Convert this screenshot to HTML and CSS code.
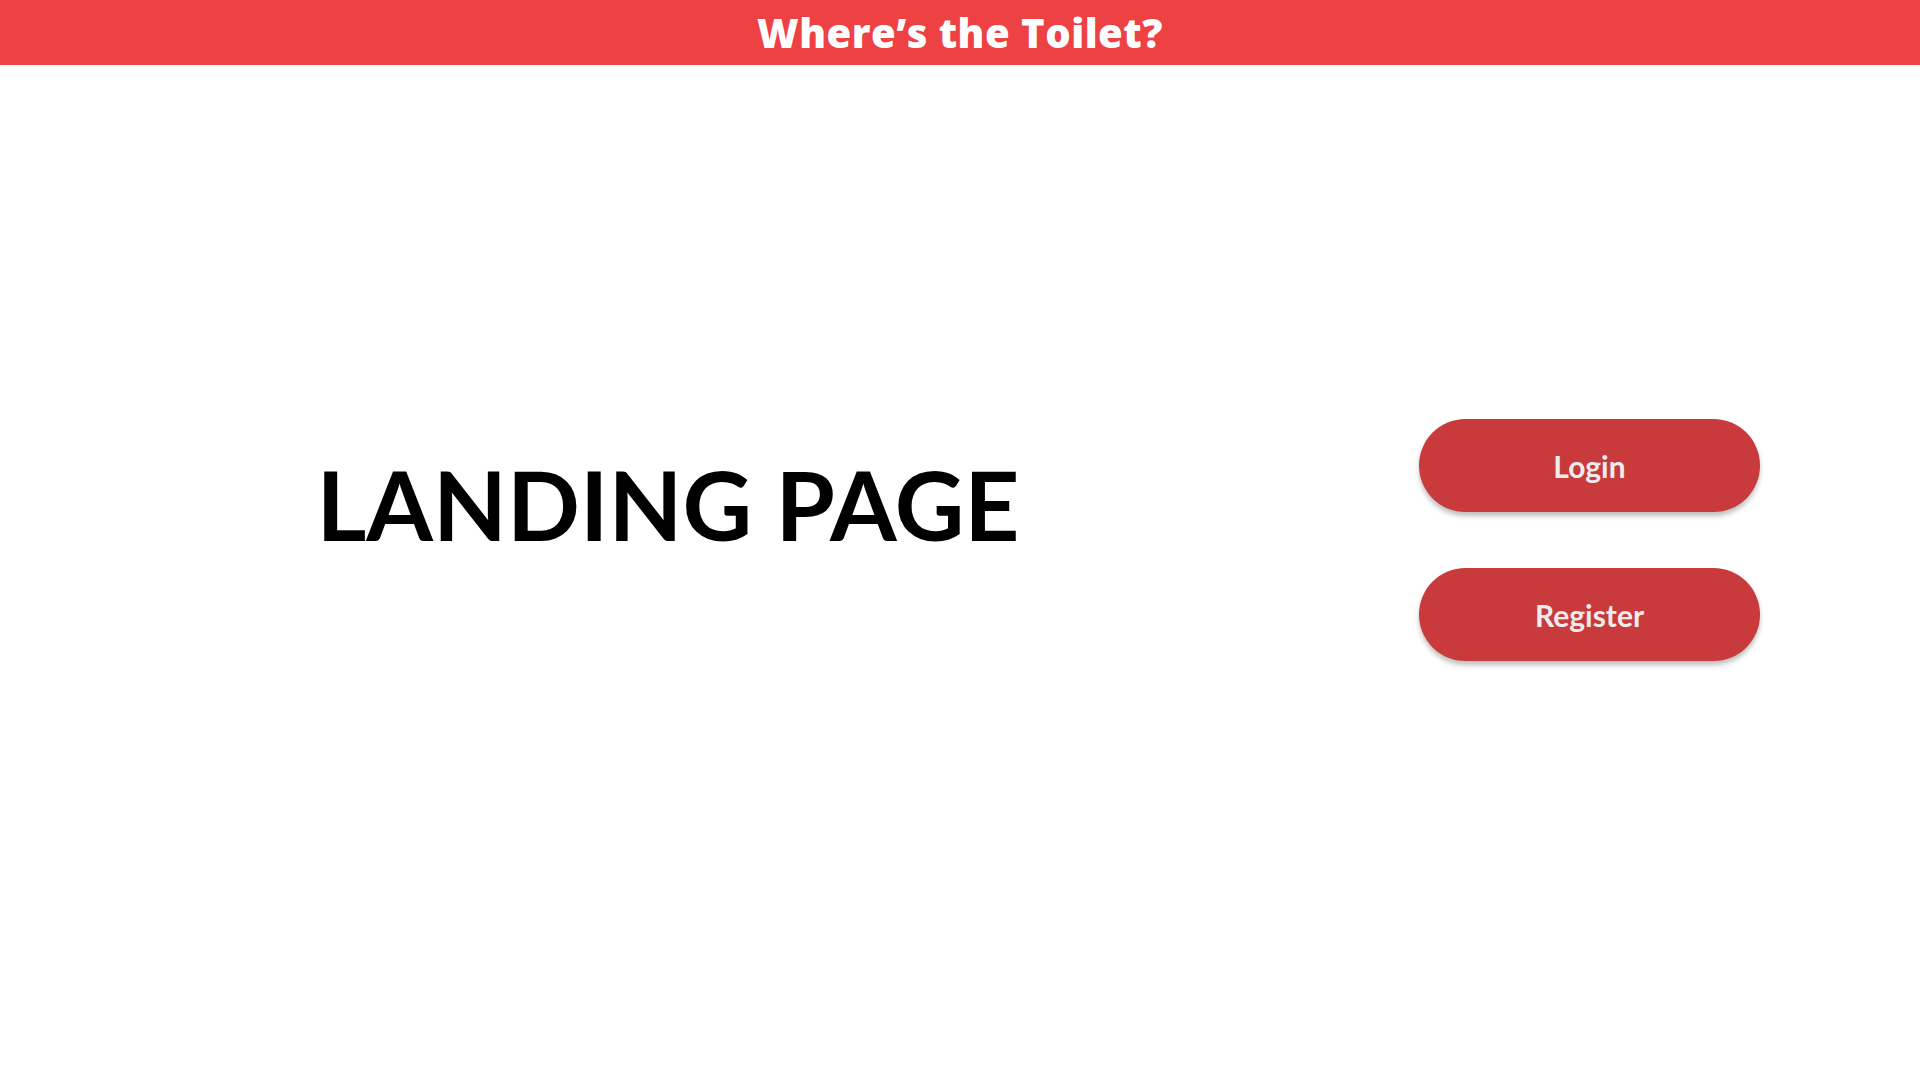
FILE: index.html
```html
<!DOCTYPE html>
<html lang="en">
<head>
<meta charset="utf-8">
<title>Where's the Toilet?</title>
<link rel="stylesheet" href="styles.css">
</head>
<body>
<header class="topbar">
  <h1 class="brand">Where’s the Toilet?</h1>
</header>
<main class="landing">
  <section class="hero">
    <h2 class="hero-title">LANDING PAGE</h2>
  </section>
  <section class="actions">
    <button class="pill">Login</button>
    <button class="pill">Register</button>
  </section>
</main>
</body>
</html>
```
FILE: styles.css
```css
* { box-sizing: border-box; }
html, body { margin: 0; padding: 0; }
body {
  width: 1920px;
  height: 1080px;
  background: #ffffff;
  font-family: "Lato", "Open Sans", sans-serif;
  overflow: hidden;
}
.topbar {
  height: 65px;
  background: #ee4143;
  display: flex;
  align-items: center;
  justify-content: center;
}
.brand {
  margin: 0;
  color: #ffffff;
  font-family: "Open Sans", "Noto Sans", sans-serif;
  font-weight: 800;
  font-size: 40px;
  letter-spacing: 0.5px;
  line-height: 1;
}
.landing {
  display: grid;
  grid-template-columns: 1336px 341px;
  column-gap: 83px;
  padding-top: 354px;
}
.hero {
  display: flex;
  justify-content: center;
  padding-top: 27px;
}
.hero-title {
  margin: 0;
  font-family: "Lato", sans-serif;
  font-weight: 700;
  font-size: 96px;
  line-height: 1.2;
  color: #000000;
}
.actions {
  display: flex;
  flex-direction: column;
  gap: 56px;
}
.pill {
  width: 341px;
  height: 93px;
  border: none;
  border-radius: 47px;
  background: #c83a3b;
  color: #ececec;
  font-family: "Lato", sans-serif;
  font-weight: 700;
  font-size: 30px;
  box-shadow: 0 4px 5px rgba(0, 0, 0, 0.25);
  cursor: pointer;
}
```
